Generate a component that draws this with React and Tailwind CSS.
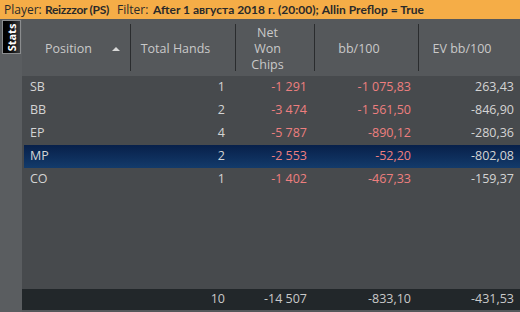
export default function App() {
  const rows = [
    { pos: 'SB', hands: '1', net: '-1 291', bb: '-1 075,83', ev: '263,43' },
    { pos: 'BB', hands: '2', net: '-3 474', bb: '-1 561,50', ev: '-846,90' },
    { pos: 'EP', hands: '4', net: '-5 787', bb: '-890,12', ev: '-280,36' },
    { pos: 'MP', hands: '2', net: '-2 553', bb: '-52,20', ev: '-802,08', sel: true },
    { pos: 'CO', hands: '1', net: '-1 402', bb: '-467,33', ev: '-159,37' },
  ];

  return (
    <div className="w-[520px] h-[312px] overflow-hidden flex flex-col bg-[#5a5d60] text-[12px] leading-none" style={{ fontFamily: '"Open Sans", "Noto Sans", sans-serif' }}>
      {/* filter bar */}
      <div className="h-[19px] shrink-0 bg-[#f5ad47] text-[#2a2a2a] flex items-center pl-1 whitespace-nowrap text-[12px]">
        <span className="w-[41px] shrink-0">Player:</span>
        <span className="w-[72px] shrink-0 font-bold text-[12px] tracking-[-0.3px]" style={{ fontFamily: 'Lato, "Open Sans", sans-serif' }}>Reizzzor (PS)</span>
        <span className="w-[36px] shrink-0">Filter:</span>
        <span className="font-bold text-[12px]" style={{ fontFamily: 'Lato, "Open Sans", sans-serif' }}>After 1 августа 2018 г. (20:00); Allin Preflop = True</span>
      </div>

      <div className="flex-1 flex min-h-0">
        {/* side tabs */}
        <div className="w-[22px] shrink-0 bg-[#5a5d60] pt-px pl-[2px]">
          <div className="w-[19px] h-[34px] border border-[#8a8c8e] bg-gradient-to-r from-black to-[#3a3c3e] flex items-center justify-center">
            <span className="-rotate-90 text-white font-bold text-[11px] whitespace-nowrap">Stats</span>
          </div>
        </div>

        <div className="flex-1 flex flex-col min-w-0">
          {/* header */}
          <div className="h-[57px] shrink-0 bg-[#55585b] flex text-[#c9c9c9] text-[12.5px]">
            <div className="w-[108px] relative flex items-center justify-center pr-[15px] pt-[3px]">
              Position
              <span className="absolute right-[10px] top-[28px] w-0 h-0 border-l-[4px] border-r-[4px] border-b-[4px] border-l-transparent border-r-transparent border-b-[#d8d8d8]"></span>
            </div>
            <div className="w-px my-[5px] bg-[#2a2c2e]"></div>
            <div className="w-[104px] flex items-center justify-center pr-[15px] pt-[3px]">Total Hands</div>
            <div className="w-px my-[5px] bg-[#2a2c2e]"></div>
            <div className="w-[78px] flex flex-col items-center justify-center pr-[15px] pt-[3px] leading-[16px] text-center">
              <span>Net</span>
              <span>Won</span>
              <span>Chips</span>
            </div>
            <div className="w-px my-[5px] bg-[#2a2c2e]"></div>
            <div className="w-[103px] flex items-center justify-center pr-[15px] pt-[3px]">bb/100</div>
            <div className="w-px my-[5px] bg-[#2a2c2e]"></div>
            <div className="flex-1 flex items-center justify-center pr-[15px] pt-[3px]">EV bb/100</div>
          </div>

          {/* body */}
          <div className="flex-1 bg-[#474a4d] pl-[2px] text-[12.5px]">
            {rows.map((r) => (
              <div
                key={r.pos}
                className={`h-[23px] flex items-center ${r.sel ? 'bg-gradient-to-b from-[#08204a] to-[#133b6b]' : ''}`}
              >
                <div className="w-[106px] pl-[6px] text-[#d4d4d4]">{r.pos}</div>
                <div className="w-[95px] text-right text-[#d4d4d4]">{r.hands}</div>
                <div className="w-[82px] text-right text-[#ee7f7f]">{r.net}</div>
                <div className="w-[104px] text-right text-[#ee7f7f]">{r.bb}</div>
                <div className="w-[103px] text-right text-[#d4d4d4]">{r.ev}</div>
              </div>
            ))}
          </div>

          {/* totals */}
          <div className="h-[21px] shrink-0 bg-[#22272a] flex items-center text-[12.5px] text-[#c9c9c9] pl-[2px]">
            <div className="w-[106px]"></div>
            <div className="w-[95px] text-right">10</div>
            <div className="w-[82px] text-right">-14 507</div>
            <div className="w-[104px] text-right">-833,10</div>
            <div className="w-[103px] text-right">-431,53</div>
          </div>
          <div className="h-[2px] shrink-0 bg-[#55585b]"></div>
        </div>
      </div>
    </div>
  );
}
